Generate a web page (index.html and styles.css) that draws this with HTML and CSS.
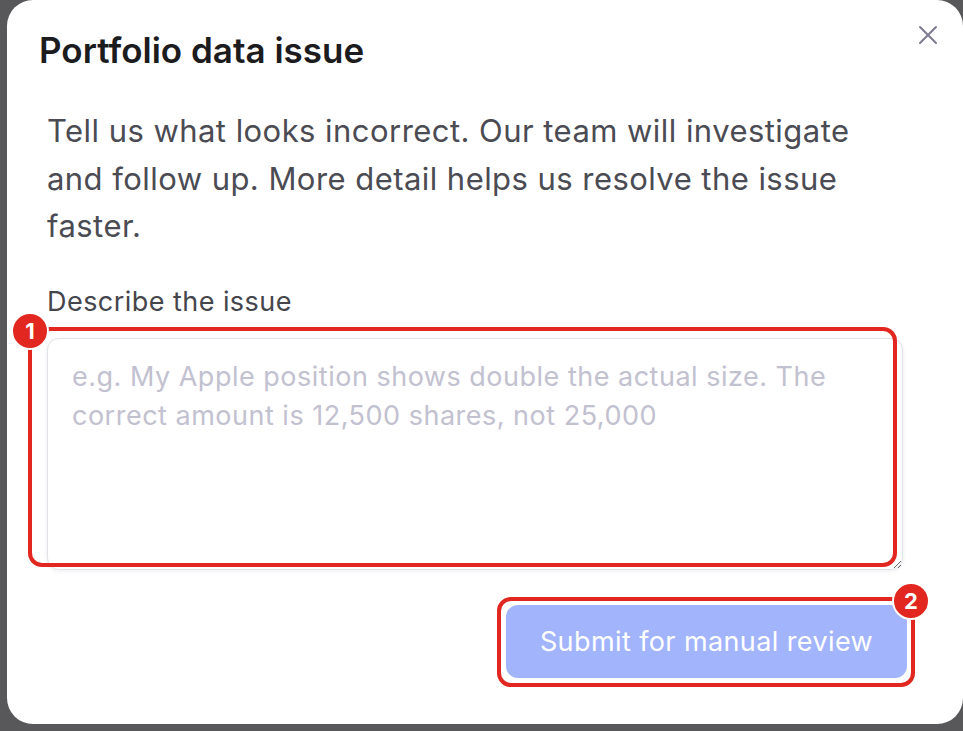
FILE: index.html
```html
<!DOCTYPE html>
<html lang="en">
<head>
    <meta charset="UTF-8">
    <meta name="viewport" content="width=device-width, initial-scale=1.0">
    <title>Portfolio data issue</title>
    <link rel="stylesheet" href="styles.css">
</head>
<body>

    <div class="modal">
        <button class="close" aria-label="Close">
            <svg width="20" height="20" viewBox="0 0 20 20">
                <path d="M2 2 L18 18 M18 2 L2 18" stroke="#7b7a8e" stroke-width="2" stroke-linecap="round"/>
            </svg>
        </button>

        <h2 class="modal-title">Portfolio data issue</h2>

        <p class="modal-text">Tell us what looks incorrect. Our team will investigate and follow up. More detail helps us resolve the issue faster.</p>

        <!-- Issue Form -->
        <form class="issue-form">
            <label for="issue">Describe the issue</label>
            <textarea id="issue" name="issue" placeholder="e.g. My Apple position shows double the actual size. The correct amount is 12,500 shares, not 25,000"></textarea>
            <div class="form-actions">
                <button type="submit" class="btn" disabled>Submit for manual review</button>
            </div>
        </form>
    </div>

    <!-- Step markers -->
    <div class="marker marker-1"><span class="badge">1</span></div>
    <div class="marker marker-2"><span class="badge">2</span></div>

</body>
</html>
```

FILE: styles.css
```css
/* General Styles */
body {
    font-family: Inter, "Noto Sans", sans-serif;
    margin: 0;
    padding: 0;
    height: 731px;
    overflow: hidden;
    background-color: #58585a;
}

.modal {
    position: relative;
    box-sizing: border-box;
    margin-left: 7px;
    width: 956px;
    height: 724px;
    padding: 29px 56px 0 40px;
    background-color: #fff;
    border-radius: 26px;
}

.close {
    position: absolute;
    top: 25px;
    right: 25px;
    padding: 0;
    border: none;
    background: none;
    cursor: pointer;
}

.modal-title {
    margin: 0 0 0 -8px;
    font-size: 35px;
    line-height: 42px;
    font-weight: 600;
    color: #1c1c1f;
}

.modal-text {
    margin: 36px 0 0;
    font-size: 31px;
    line-height: 47.5px;
    letter-spacing: 0.45px;
    color: #4b4b53;
}

/* Form Styles */
.issue-form {
    display: flex;
    flex-direction: column;
    margin-top: 33px;
}

.issue-form label {
    font-size: 27px;
    line-height: 37.5px;
    letter-spacing: 0.45px;
    color: #45454c;
}

.issue-form textarea {
    box-sizing: border-box;
    width: 856px;
    height: 232px;
    margin-top: 18px;
    padding: 18px 24px;
    font-family: inherit;
    font-size: 27px;
    line-height: 39px;
    letter-spacing: 0.5px;
    color: #2a2a30;
    border: 1px solid #e2e2e9;
    border-radius: 12px;
    box-shadow: 0 1px 4px rgba(20, 20, 40, 0.08);
    outline: none;
}

.issue-form textarea::placeholder {
    color: #c2c1d0;
}

.form-actions {
    display: flex;
    justify-content: flex-end;
    margin-top: 35px;
}

.btn {
    width: 401px;
    height: 73px;
    padding: 0;
    font-family: inherit;
    font-size: 27px;
    letter-spacing: 0.4px;
    color: #fff;
    background-color: #a2b4fb;
    border: none;
    border-radius: 12px;
}

/* Step markers drawn over the form */
.marker {
    position: absolute;
    box-sizing: border-box;
    border: 4px solid #e1271f;
    border-radius: 14px;
}

.marker-1 {
    left: 28px;
    top: 327px;
    width: 869px;
    height: 240px;
}

.marker-2 {
    left: 497px;
    top: 597px;
    width: 418px;
    height: 90px;
}

.badge {
    position: absolute;
    display: flex;
    justify-content: center;
    align-items: center;
    width: 34px;
    height: 34px;
    font-size: 22px;
    font-weight: 700;
    color: #fff;
    background-color: #e1271f;
    border: 2px solid #fff;
    border-radius: 50%;
}

.marker-1 .badge {
    left: -21px;
    top: -19px;
}

.marker-2 .badge {
    right: -19px;
    top: -19px;
}
```
